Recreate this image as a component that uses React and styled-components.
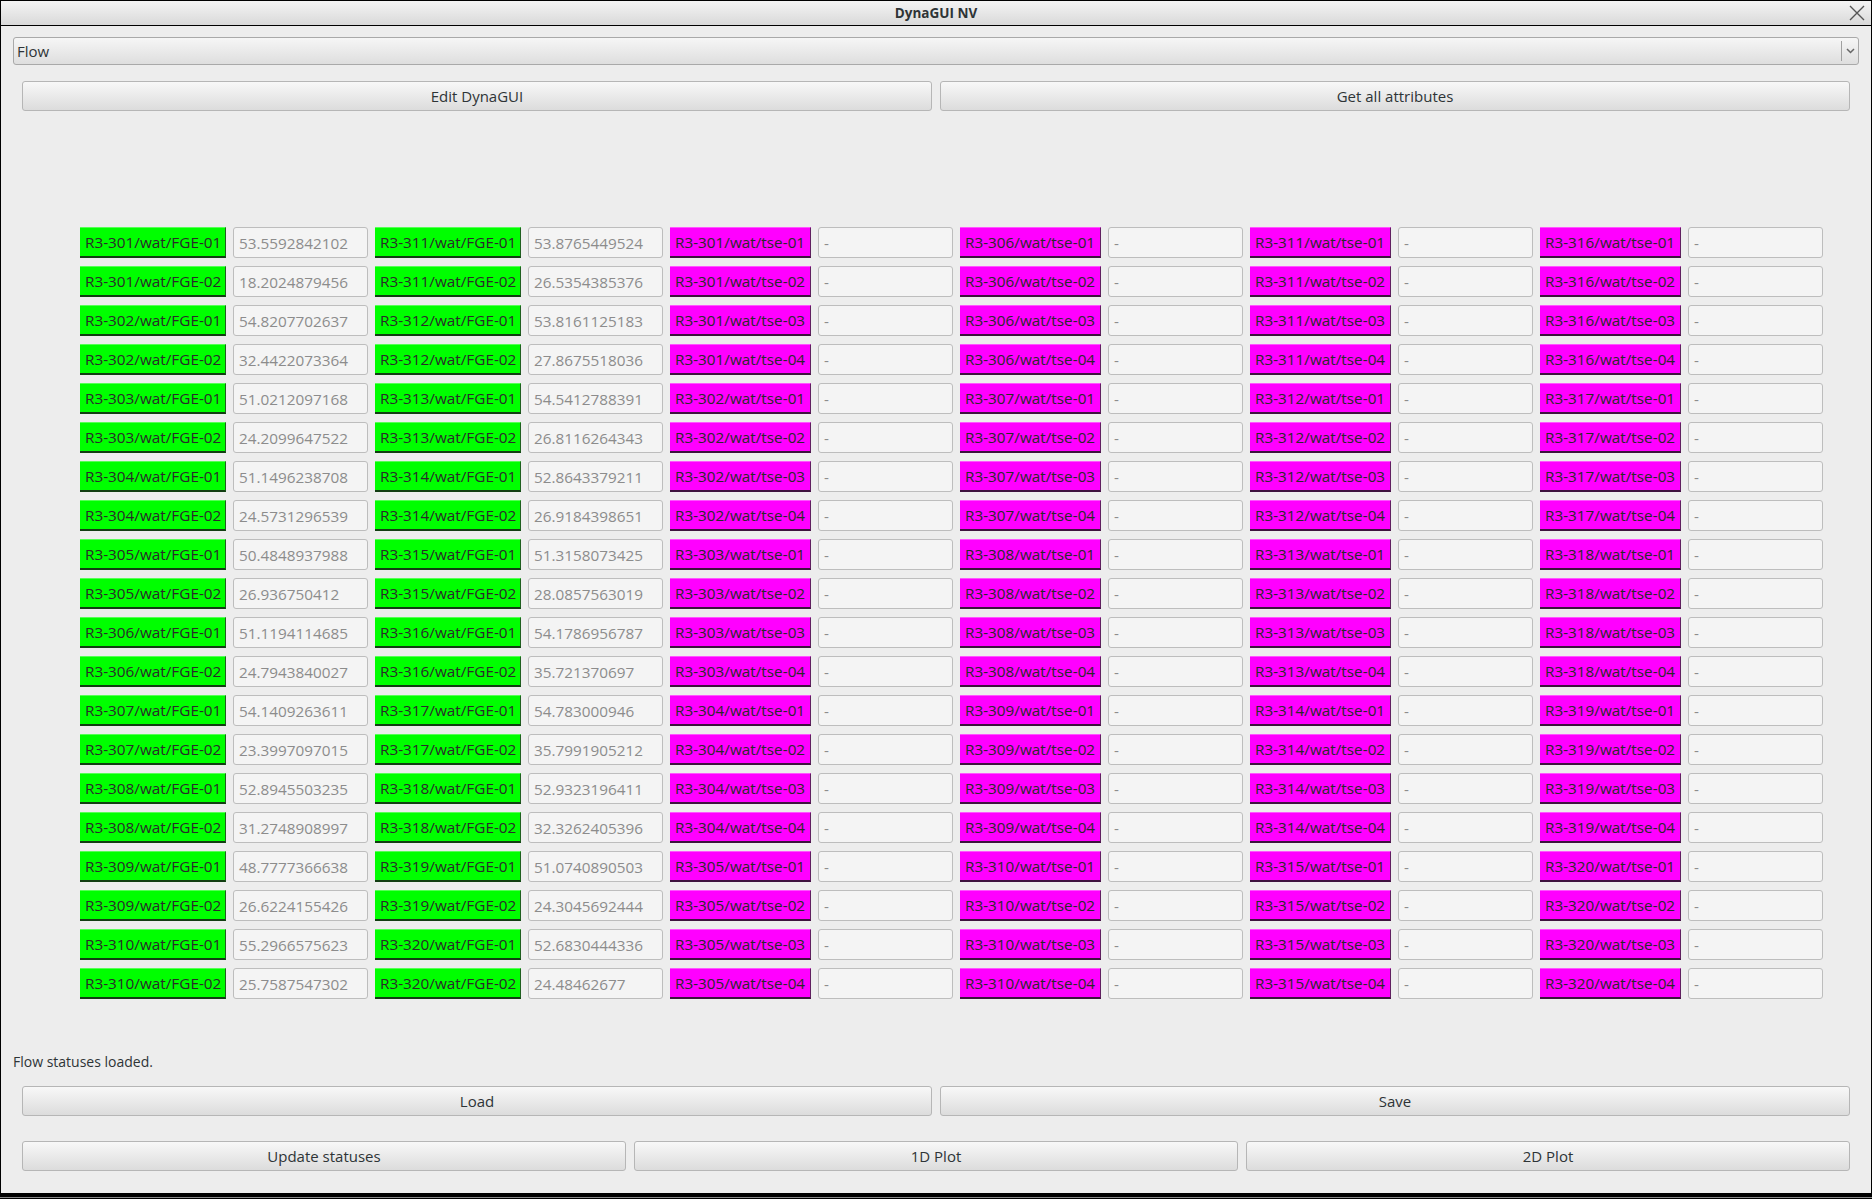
import React from 'react';
import styled, { createGlobalStyle } from 'styled-components';

const GlobalStyle = createGlobalStyle`
    html, body {
        margin: 0;
        padding: 0;
        background: #ededed;
        overflow: hidden;
    }
    body {
        font-family: "Open Sans", "DejaVu Sans", sans-serif;
        color: #2e3436;
    }
`;

const Window = styled.div`
    width: 1872px;
    height: 1199px;
    box-sizing: border-box;
    display: flex;
    flex-direction: column;
    border-top: 1px solid #000;
    border-left: 1px solid #000;
    border-right: 1px solid #000;
    background: #ededed;
`;

const TitleBar = styled.div`
    height: 24px;
    flex-shrink: 0;
    display: flex;
    align-items: center;
    justify-content: center;
    position: relative;
    background: linear-gradient(#f4f4f4, #d9d9d9);
    border-bottom: 1px solid #000;
    font-size: 13.5px;
    font-weight: bold;
    color: #2e3436;
`;

const CloseButton = styled.div`
    position: absolute;
    right: 5px;
    top: 3px;
    width: 18px;
    height: 18px;
    display: flex;
    align-items: center;
    justify-content: center;
`;

const Body = styled.div`
    flex: 1;
    display: flex;
    flex-direction: column;
    padding: 11px 12px 0 12px;
`;

const Combo = styled.div`
    height: 28px;
    box-sizing: border-box;
    display: flex;
    align-items: center;
    border: 1px solid #a9a9a9;
    border-radius: 3px;
    background: linear-gradient(#f6f6f6, #dedede);
    font-size: 15px;
    padding-left: 3px;
`;

const ComboText = styled.span`
    flex: 1;
`;

const ComboArrow = styled.div`
    width: 16px;
    height: 20px;
    border-left: 1px solid #a0a0a0;
    display: flex;
    align-items: center;
    justify-content: center;
`;

const ButtonRow = styled.div`
    display: grid;
    grid-template-columns: repeat(${p => p.cols}, 1fr);
    gap: 8px;
    padding: 0 9px;
    margin-top: ${p => p.top}px;
`;

const Button = styled.div`
    height: 30px;
    box-sizing: border-box;
    display: flex;
    align-items: center;
    justify-content: center;
    border: 1px solid #b6b6b6;
    border-radius: 3px;
    background: linear-gradient(#f8f8f8, #dcdcdc);
    font-size: 15px;
    color: #2e3436;
`;

const Grid = styled.div`
    display: grid;
    grid-template-columns: 146px 135px 146px 135px 141px 135px 141px 135px 141px 135px 141px 135px;
    grid-auto-rows: 31px;
    column-gap: 7px;
    row-gap: 8px;
    margin-top: 116px;
    margin-left: 67px;
`;

const Device = styled.div`
    box-sizing: border-box;
    height: 31px;
    display: flex;
    align-items: center;
    padding-left: 5px;
    font-size: 15.3px;
    color: #2a2a2a;
    white-space: nowrap;
    background: ${p => (p.kind === 'flow' ? '#00ff00' : '#ff00ff')};
    border-top: 1px solid ${p => (p.kind === 'flow' ? '#55ff55' : '#ff55ff')};
    border-right: 1px solid ${p => (p.kind === 'flow' ? '#1f5f1f' : '#5f1f5f')};
    border-bottom: 2px solid ${p => (p.kind === 'flow' ? '#123d12' : '#3d123d')};
`;

const Field = styled.div`
    box-sizing: border-box;
    height: 31px;
    display: flex;
    align-items: center;
    padding-left: 5px;
    background: #f4f4f4;
    border: 1px solid #bdbdbd;
    border-radius: 3px;
    font-size: 15.3px;
    color: #8c8c8c;
    white-space: nowrap;
    overflow: hidden;
`;

const Status = styled.div`
    margin-top: auto;
    font-size: 14px;
    color: #2e3436;
    height: 20px;
    line-height: 20px;
    margin-bottom: 14px;
`;

const BottomSpace = styled.div`
    height: 22px;
    flex-shrink: 0;
`;

const BottomFrame = styled.div`
    height: 6px;
    flex-shrink: 0;
    margin: 0 -1px;
    border-top: 4px solid #000;
    border-bottom: 1px solid #000;
    box-sizing: border-box;
    background: #888;
`;

const flowValues = {
    '301-01': '53.5592842102', '301-02': '18.2024879456',
    '302-01': '54.8207702637', '302-02': '32.4422073364',
    '303-01': '51.0212097168', '303-02': '24.2099647522',
    '304-01': '51.1496238708', '304-02': '24.5731296539',
    '305-01': '50.4848937988', '305-02': '26.936750412',
    '306-01': '51.1194114685', '306-02': '24.7943840027',
    '307-01': '54.1409263611', '307-02': '23.3997097015',
    '308-01': '52.8945503235', '308-02': '31.2748908997',
    '309-01': '48.7777366638', '309-02': '26.6224155426',
    '310-01': '55.2966575623', '310-02': '25.7587547302',
    '311-01': '53.8765449524', '311-02': '26.5354385376',
    '312-01': '53.8161125183', '312-02': '27.8675518036',
    '313-01': '54.5412788391', '313-02': '26.8116264343',
    '314-01': '52.8643379211', '314-02': '26.9184398651',
    '315-01': '51.3158073425', '315-02': '28.0857563019',
    '316-01': '54.1786956787', '316-02': '35.721370697',
    '317-01': '54.783000946', '317-02': '35.7991905212',
    '318-01': '52.9323196411', '318-02': '32.3262405396',
    '319-01': '51.0740890503', '319-02': '24.3045692444',
    '320-01': '52.6830444336', '320-02': '24.48462677',
};

// 6 column groups, 20 rows each
const columns = [
    { kind: 'flow', start: 301 },
    { kind: 'flow', start: 311 },
    { kind: 'tse', start: 301 },
    { kind: 'tse', start: 306 },
    { kind: 'tse', start: 311 },
    { kind: 'tse', start: 316 },
];

function cellFor(col, row) {
    if (col.kind === 'flow') {
        const dev = col.start + Math.floor(row / 2);
        const ch = `0${(row % 2) + 1}`;
        return {
            name: `R3-${dev}/wat/FGE-${ch}`,
            value: flowValues[`${dev}-${ch}`],
        };
    }
    const dev = col.start + Math.floor(row / 4);
    const ch = `0${(row % 4) + 1}`;
    return { name: `R3-${dev}/wat/tse-${ch}`, value: '-' };
}

const rows = Array.from({ length: 20 }, (_, i) => i);

export default function App() {
    return (
        <>
            <GlobalStyle />
            <Window>
                <TitleBar>
                    DynaGUI NV
                    <CloseButton>
                        <svg width="16" height="16" viewBox="0 0 16 16">
                            <path d="M1 1 L15 15 M15 1 L1 15" stroke="#555" strokeWidth="1.4" fill="none" />
                        </svg>
                    </CloseButton>
                </TitleBar>
                <Body>
                    <Combo>
                        <ComboText>Flow</ComboText>
                        <ComboArrow>
                            <svg width="9" height="6" viewBox="0 0 9 6">
                                <path d="M1 1 L4.5 4.5 L8 1" stroke="#666" strokeWidth="1.5" fill="none" />
                            </svg>
                        </ComboArrow>
                    </Combo>

                    <ButtonRow cols={2} top={16}>
                        <Button>Edit DynaGUI</Button>
                        <Button>Get all attributes</Button>
                    </ButtonRow>

                    <Grid>
                        {rows.map(r =>
                            columns.map((col, c) => {
                                const cell = cellFor(col, r);
                                return (
                                    <React.Fragment key={`${r}-${c}`}>
                                        <Device kind={col.kind}>{cell.name}</Device>
                                        <Field>{cell.value}</Field>
                                    </React.Fragment>
                                );
                            })
                        )}
                    </Grid>

                    <Status>Flow statuses loaded.</Status>

                    <ButtonRow cols={2} top={0}>
                        <Button>Load</Button>
                        <Button>Save</Button>
                    </ButtonRow>

                    <ButtonRow cols={3} top={25}>
                        <Button>Update statuses</Button>
                        <Button>1D Plot</Button>
                        <Button>2D Plot</Button>
                    </ButtonRow>

                    <BottomSpace />
                </Body>
                <BottomFrame />
            </Window>
        </>
    );
}
